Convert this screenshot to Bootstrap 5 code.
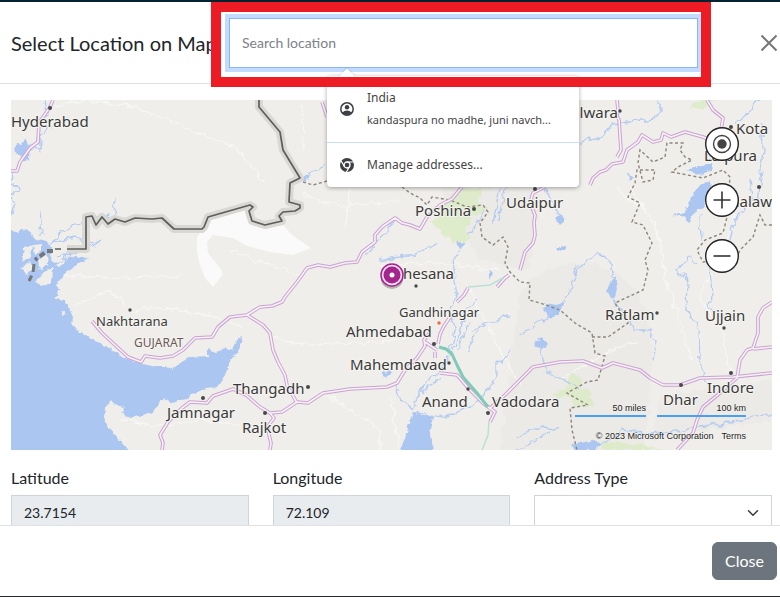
<!DOCTYPE html>
<html lang="en">
<head>
<meta charset="utf-8">
<meta name="viewport" content="width=device-width, initial-scale=1">
<title>Select Location on Map</title>
<link href="https://cdn.jsdelivr.net/npm/bootstrap@5.3.0/dist/css/bootstrap.min.css" rel="stylesheet">
<style>
body{font-family:Lato,sans-serif;color:#212529;background:#fff}
.dialog-shell{height:100vh;border-top:2px solid #04222f;border-bottom:1px solid #26282b}
.dialog-top{height:82px;padding:0 2px 0 11px;gap:16px;border-bottom:1px solid #dee2e6}
.dialog-title{font-size:20px;line-height:30px;width:202px}
.finder{margin-right:46px}
.finder .form-control{height:50px;border:1px solid #86b7fe;border-radius:0;font-size:14px;box-shadow:0 0 0 4px #c2dbfe}
.finder .form-control::placeholder{color:#7b8289}
.callout-frame{inset:-16px -13px -19px -18px;border:10px solid #ed1c24;z-index:6;pointer-events:none}
.suggest{left:98px;top:58px;width:252px;z-index:5;border-radius:4px;box-shadow:0 1px 4px rgba(0,0,0,.35);font-family:"Noto Sans",sans-serif;color:#333}
.suggest::before{content:"";position:absolute;left:14px;top:-5px;width:12px;height:12px;background:#fff;transform:rotate(45deg);box-shadow:-1px -1px 1px rgba(0,0,0,.08)}
.suggest button{padding:0 13px;gap:13px;color:#444}
.suggest .entry-main{height:67px;border:0;border-bottom:1px solid #c9ddf8}
.suggest .entry-manage{height:44px}
.suggest .line-a{font-size:12px;line-height:22px}
.suggest .line-b{font-size:11px;line-height:22px}
.dismiss{width:18px;height:18px}
.dialog-main{min-height:0;padding:16px 8px 0 11px}
.map-view{height:350px;background:#efeeea}
.map-view text{font-family:"Noto Sans",sans-serif;fill:#3a3a3a;stroke:#f5f4f1;stroke-width:2px;paint-order:stroke;stroke-linejoin:round}
.t-city{font-size:15px}
.t-town{font-size:13px}
.t-state{font-size:12px}
.map-view text.t-state{fill:#6b5757}
.map-tools{right:33px;top:27px;gap:22px}
.map-tools button{width:34px;height:34px}
.map-notes{right:26px;bottom:7px;font:9px/14px "Liberation Sans",sans-serif;color:#222;text-shadow:0 0 2px #fff}
.map-notes a{color:inherit}
.map-notes .scales{gap:11px;margin-bottom:12px}
.map-notes .scale{border-bottom:2px solid #4a9ff5;height:16px}
.scale-mi{width:71px}
.scale-km{width:89px}
.fields{margin-top:16px}
.fields label{font-size:16px;line-height:24px;margin-bottom:5px}
.fields .form-control,.fields .form-select{border-radius:0;height:36px;font-size:14px;border-color:#ced4da}
.fields .form-control{background:#e9ecef;padding:5px 12px 7px}
.fields .form-select{background-position:right 10px center}
.dialog-bottom{height:71px;border-top:1px solid #dee2e6;padding:0 3px}
.dialog-bottom .btn{font-size:16px}
</style>
<script src="https://cdn.jsdelivr.net/npm/bootstrap@5.3.0/dist/js/bootstrap.bundle.min.js"></script>
</head>
<body>
<div class="dialog-shell d-flex flex-column overflow-hidden">
<header class="dialog-top d-flex align-items-center flex-shrink-0">
<h1 class="dialog-title mb-0 fw-normal text-nowrap flex-shrink-0">Select Location on Map</h1>
<div class="finder position-relative flex-grow-1">
<input type="text" class="form-control" placeholder="Search location" aria-label="Search location">
<div class="suggest position-absolute bg-white">
<button type="button" class="entry-main btn rounded-0 w-100 d-flex align-items-center text-start">
<svg width="14" height="14" viewBox="0 0 14 14" aria-hidden="true"><circle cx="7" cy="7" r="6.2" fill="none" stroke="#3c3f43" stroke-width="1.5"/><circle cx="7" cy="5.2" r="2.2" fill="#3c3f43"/><path d="M2.4 10.4Q4.3 8.6 7 8.6T11.6 10.4Q9.9 13 7 13T2.4 10.4Z" fill="#3c3f43"/></svg>
<span><span class="line-a d-block">India</span><span class="line-b d-block text-nowrap">kandaspura no madhe, juni navch...</span></span>
</button>
<button type="button" class="entry-manage btn border-0 w-100 d-flex align-items-center text-start">
<svg width="14" height="14" viewBox="0 0 14 14" aria-hidden="true"><circle cx="7" cy="7" r="7" fill="#3c3f43"/><circle cx="7" cy="7" r="3" fill="none" stroke="#fff" stroke-width="1.3"/><path d="M7 4H13.6M4.4 8.5L1.1 2.9M9.6 8.5L6.4 14" stroke="#fff" stroke-width="1.2" fill="none"/></svg>
<span class="line-a">Manage addresses...</span>
</button>
</div>
<div class="callout-frame position-absolute"></div>
</div>
<button type="button" class="dismiss btn p-0 border-0 d-flex flex-shrink-0" aria-label="Close dialog"><svg width="18" height="18" viewBox="0 0 18 18" fill="none" stroke="#777" stroke-width="2"><path d="M1.500 1.500L16.500 16.500M16.500 1.500L1.500 16.500"/></svg></button>
</header>
<main class="dialog-main flex-grow-1 overflow-hidden">
<div class="map-view position-relative overflow-hidden">
<svg class="d-block w-100 h-100" viewBox="11 100 761 350" preserveAspectRatio="xMidYMid slice" role="img" aria-label="Map of Gujarat">
<defs>
<filter id="meander" filterUnits="userSpaceOnUse" x="0" y="90" width="790" height="370"><feTurbulence type="fractalNoise" baseFrequency=".12" numOctaves="2" seed="4"/><feDisplacementMap in="SourceGraphic" scale="9" xChannelSelector="R" yChannelSelector="G"/></filter>
<filter id="shore" filterUnits="userSpaceOnUse" x="0" y="90" width="790" height="370"><feTurbulence type="fractalNoise" baseFrequency=".2" numOctaves="2" seed="9"/><feDisplacementMap in="SourceGraphic" scale="5" xChannelSelector="R" yChannelSelector="G"/></filter>
<g id="roads" fill="none" stroke-linejoin="round">
<path d="M53 100L50 107L39 123L38 142L30 148L20 162L17 171H11"/>
<path d="M92 321L102 333L128 357L141 362L145 356L160 358L173 356L183 350L195 338L212 337L218 327L230 317L247 315L260 307L272 306L282 302L285 297L297 282L307 268L318 265L330 267L345 263L357 262L362 252L375 242V235L382 227L395 218L402 223L410 225L420 229L427 217L440 205L452 199L462 187"/>
<path d="M247 315L263 325L270 333L273 350L278 362L285 375L287 385L297 403"/>
<path d="M162 450L163 443L160 435L168 422L182 408L190 402L207 403L213 396L233 389L246 395L260 407L270 413L282 412L297 402L308 403L323 393L350 389L387 387L397 383L405 370L417 358L425 346L424 340L430 332M438 344L440 334L444 326L450 317M457 302L464 295L468 288M435 352V358M425 342L437 350"/>
<path d="M270 413L274 418L268 426L269 435L271 443L270 450"/>
<path d="M440 373L457 375L470 390L483 403L495 412L490 422M489 409L505 395L520 380L533 367L560 362L583 361L602 368L613 363L640 370L650 378L663 385L680 385L700 378L733 377L772 373"/>
<path d="M737 378L740 360L747 350L753 348L758 333V317L763 308L772 302M753 349L772 347M737 378L730 384L720 393L703 407L697 420L693 433L677 450"/>
<path d="M590 185L593 178L600 172L606 170L612 164L623 162L627 150L638 142L642 135L653 142L661 140L663 133L671 137L685 132L703 137L720 144M617 100L618 110L617 116L619 120L621 150L617 157M707 100L713 110L723 118L721 130"/>
<path d="M545 187L533 193L530 203L535 215L534 223L535 235L533 243L525 252L520 270M509 275L505 278L497 287M322 102L327 117"/>
</g>
</defs>
<path fill="#eae9e4" d="M520 290Q560 250 610 270T650 400T600 450H500ZM440 187L540 187L530 270L480 260ZM660 395L772 380V420L650 440Z" opacity=".6" filter="url(#meander)"/>
<g fill="#dcecc5" opacity=".8" filter="url(#meander)"><path d="M440 205L462 188L482 187L478 202L490 210L472 216L465 230L472 238L462 244L445 238L430 220L445 214ZM690 107L702 100H716L706 106L694 111Z"/><path d="M570 372L583 378L578 386L590 392L594 405L575 408L572 398L548 395L567 388ZM600 442L640 443L662 450H603Z"/></g>
<path fill="none" stroke="#f8f8f5" stroke-width="1.200" d="M55 107Q100 92 155 115T235 146Q246 160 265 182M130 312Q170 300 240 326M65 275L125 278L180 276M230 250L300 275M303 195L345 207L400 200M270 338L310 345L380 342L430 332M350 187L345 230M302 105L303 150M320 390L380 430V450M630 187L640 205L655 222L661 250L665 280L680 320L692 360M728 187L735 225L715 260L700 300L720 325L731 372M380 265L430 262L500 270M470 290L500 350L520 385M560 380L610 350L640 342M120 420L150 426L200 420L240 425M75 305L110 290L125 305M390 395L400 450M618 186L624 197L640 204M700 187L725 183" filter="url(#meander)"/>
<path fill="#fafafa" d="M197 237L206 225L209 219L249 208L252 221L265 227L283 225L292 235L311 248L293 255L270 252L247 246L233 238L213 235L207 242L208 253L220 268L223 274L213 287L205 278L200 265L197 252Z"/>
<g fill="#abc6f1" filter="url(#shore)">
<path d="M5 226L16 233L22 229L30 232L34 238L46 242L52 248L50 256L54 263L64 260L76 256L88 258L76 266L64 274L57 284L60 290L55 298L65 300L70 310L73 318L72 325L80 333L104 345L125 358L143 364L155 367L165 367L172 370L180 363L190 357L208 356V348L213 352L225 348L232 351L236 340L243 337L240 348L230 361L225 375L217 387L203 390L193 393L187 399L178 401L173 403L164 399L157 405L153 412L143 415L130 418L122 413L125 407L115 405L111 400L105 408L104 417L108 427L117 437L132 455H5Z"/>
<path d="M413 413L420 414L433 417L430 428L432 440L433 455H399L407 433L409 422ZM14 146L22 143L26 138L30 146L29 160L23 162L20 156L15 153ZM546 303L556 305L565 302L560 312L551 320L546 313L543 310ZM534 342L542 338L547 344L542 349L535 346ZM609 285L616 275L618 290L612 300L607 292ZM686 170L699 167L711 163L712 171L702 175L695 173ZM700 185L711 181L709 194L705 205L696 211L689 222L682 216L672 215L685 212L690 200ZM555 217L562 215L565 221L560 225ZM555 248L565 246L566 250L558 251ZM456 242L466 243L460 249ZM382 370L386 374L390 369L391 374L387 377L382 376ZM300 179L311 174L306 182ZM628 174L634 177L630 182ZM489 270L493 274L489 279ZM570 445L595 440L603 445L595 450H575Z"/>
</g>
<g fill="#efeeea" filter="url(#shore)"><path d="M24 247L33 244L31 256L22 262ZM20 268L31 262L34 268L26 275ZM36 281L44 272L53 268L52 282L42 287ZM38 260L47 254L48 265L40 270ZM56 264L64 260L61 268ZM33 245L42 244L42 251L35 255Z"/><circle cx="63" cy="313" r="2"/><circle cx="164" cy="401" r="1.500"/></g>
<g fill="none" stroke="#b4ccf1" stroke-width="1.300" stroke-linejoin="round" filter="url(#meander)">
<path d="M45 100L47 115L39 125L39 150L27 148M47 122L50 127L42 134L40 150M13 173L12 182L18 190L12 197L15 205L11 213M40 210L42 236M50 245L60 232L84 219L115 216M115 198L114 215M53 243L75 238L88 244L103 239M56 256L80 253L103 239M64 260L68 250L85 252"/>
<path d="M303 178L325 164M367 256L383 236L395 219M377 260L415 255L437 243M483 212L476 225L468 235M462 246L454 260L457 290L450 310L455 330L448 355M500 187L493 223M506 190L498 220"/>
<path d="M580 142L600 138L612 125L630 122L655 120L660 110L658 100M735 125L750 112L760 100M760 125L764 150L759 195L757 205M750 178L752 200L735 220L730 240M574 280L578 268L600 253L612 265L615 280M560 308L574 280L576 265M520 335L541 322L552 312M540 345L546 372L580 388M613 300L625 315L635 330L650 330L655 340L653 360M676 270L688 280L687 310L699 330L700 360L708 390M710 270L712 295L708 308L727 318M700 215L701 240M545 187L562 218M678 270L690 255L697 265"/>
<path d="M396 385L400 398L412 408L425 385L440 370L450 355L460 335L465 310L478 300M413 411L432 417L455 415L463 408L475 405L490 387L497 375V365L512 350M470 322L457 350M480 325L468 350M510 316L495 320L470 330M415 398L440 378M516 438L540 426L560 430M516 450L550 432M600 445L625 430L650 434L685 430L710 425L740 422L755 416L776 413"/>
</g>
<g fill="none" stroke="#8d867d" stroke-width="1.400" stroke-dasharray="3 2.500">
<path d="M303 182L313 185L327 181M402 187L410 193L420 198L427 205L432 197L450 200L467 207L483 205L488 212L480 223L482 237L493 245L503 237L508 247L505 263L510 272L520 282L530 283L529 300L540 303L560 310L575 323L592 333L595 353L605 356L598 380L587 382L567 393L588 405L570 408L572 430L577 450"/>
<path d="M592 337L608 337L628 323L615 303L643 290L648 270L645 260L652 243L643 225L632 222L640 203L628 197L635 183L637 170L655 170L653 180L643 182L638 163L640 150L653 162L665 157L667 143L683 143L680 150L685 157L692 160L678 167L672 172L703 178L723 170L730 177L727 217L723 233L705 240L697 250L703 262L737 257L740 250L753 237L760 215L765 225H772"/>
</g>
<g fill="none" stroke-linejoin="round"><path stroke="#d9d8d4" stroke-width="8" d="M259 100V107L280 132L283 150L300 178L290 183L289 202L300 205V208L295 211L283 212L279 216L282 221L265 225L252 221L249 211L253 207L250 205L208 217L204 227L202 229H174L162 218L152 219L135 218L125 222L115 219L108 224L102 217L96 225L92 216L86 217V249H67"/><path stroke="#5d5d5c" stroke-width="1.700" d="M259 100V107L280 132L283 150L300 178L290 183L289 202L300 205V208L295 211L283 212L279 216L282 221L265 225L252 221L249 211L253 207L250 205L208 217L204 227L202 229H174L162 218L152 219L135 218L125 222L115 219L108 224L102 217L96 225L92 216L86 217V249H67M61 249H55"/><path stroke="#72777c" stroke-width="4" stroke-dasharray="6 3" d="M53 251L47 251L35 260"/><path stroke="#72777c" stroke-width="3" stroke-dasharray="8 4" d="M34 264L33 273L29 281"/></g>
<use href="#roads" stroke="#caa3d1" stroke-width="3.600"/><use href="#roads" stroke="#f7f1f6" stroke-width="1.600"/>
<path fill="none" stroke="#7fcbb8" stroke-width="3" stroke-linejoin="round" d="M439 347L446 349L452 354L457 365L463 377L477 393L488 407"/><path fill="none" stroke="#b9e2d4" stroke-width="1.500" d="M468 287L490 285L503 278M489 421L488 435L482 450"/>
<g fill="#484848"><circle cx="50" cy="108" r="2"/><circle cx="130" cy="310" r="1.700"/><circle cx="203" cy="398" r="2"/><circle cx="308" cy="387" r="2"/><circle cx="265" cy="413" r="2"/><circle cx="474" cy="209" r="2"/><circle cx="535" cy="189" r="2"/><circle cx="416" cy="286" r="1.700"/><circle cx="434" cy="344" r="2"/><circle cx="449" cy="363" r="1.700"/><circle cx="468" cy="389" r="1.700"/><circle cx="488" cy="413" r="2"/><circle cx="620" cy="111" r="1.700"/><circle cx="731" cy="127" r="2"/><circle cx="759" cy="187" r="2"/><circle cx="657" cy="313" r="1.700"/><circle cx="724" cy="328" r="1.700"/><circle cx="731" cy="373" r="2"/><circle cx="681" cy="385" r="2"/><circle cx="439" cy="323" r="1.700" fill="#ef6849"/></g>
<g class="t-city"><text x="11" y="127">Hyderabad</text><text x="167" y="418">Jamnagar</text><text x="233" y="394">Thangadh</text><text x="242" y="433">Rajkot</text><text x="415" y="216">Poshina</text><text x="506" y="208">Udaipur</text><text x="403" y="279">hesana</text><text x="346" y="337">Ahmedabad</text><text x="350" y="370">Mahemdavad</text><text x="422" y="407">Anand</text><text x="492" y="407">Vadodara</text><text x="605" y="320">Ratlam</text><text x="705" y="321">Ujjain</text><text x="707" y="393">Indore</text><text x="663" y="405">Dhar</text><text x="736" y="134">Kota</text><text x="704" y="161">Lalpura</text><text x="618" y="118" text-anchor="end">lwara</text><text x="772" y="207" text-anchor="end">halaw</text></g>
<g class="t-town"><text x="96" y="326">Nakhtarana</text><text x="399" y="317">Gandhinagar</text></g><text class="t-state" x="134" y="347">GUJARAT</text>
<ellipse cx="392" cy="279" rx="11" ry="10" fill="#555" opacity=".4"/><circle cx="392" cy="275" r="11" fill="#f2dff0" stroke="#a6258d" stroke-width="1.500"/><circle cx="392" cy="275" r="8.500" fill="#a6258d"/><circle cx="392" cy="275" r="2.500" fill="#fff"/>
</svg>
<div class="map-tools position-absolute d-flex flex-column">
<button type="button" class="btn p-0 border-0 d-flex" aria-label="Locate me"><svg width="34" height="34" viewBox="0 0 34 34"><circle cx="17" cy="17" r="16.300" fill="#fff" stroke="#222" stroke-width="1.400"/><circle cx="17" cy="17" r="8.500" fill="none" stroke="#444" stroke-width="1.400"/><circle cx="17" cy="17" r="4.700" fill="#444"/></svg></button>
<button type="button" class="btn p-0 border-0 d-flex" aria-label="Zoom in"><svg width="34" height="34" viewBox="0 0 34 34"><circle cx="17" cy="17" r="16.300" fill="#fff" stroke="#222" stroke-width="1.400"/><path d="M8.500 17H25.500M17 8.500V25.500" stroke="#333" stroke-width="1.600"/></svg></button>
<button type="button" class="btn p-0 border-0 d-flex" aria-label="Zoom out"><svg width="34" height="34" viewBox="0 0 34 34"><circle cx="17" cy="17" r="16.300" fill="#fff" stroke="#222" stroke-width="1.400"/><path d="M8.500 17H25.500" stroke="#333" stroke-width="1.600"/></svg></button>
</div>
<div class="map-notes position-absolute text-end">
<div class="scales d-flex justify-content-end"><div class="scale scale-mi">50 miles</div><div class="scale scale-km">100 km</div></div>
<div class="d-flex justify-content-end gap-2 text-nowrap"><span>© 2023 Microsoft Corporation</span><a href="#" class="text-decoration-none">Terms</a></div>
</div>
</div>
<form class="fields row">
<div class="col-4"><label for="lat" class="d-block">Latitude</label><input id="lat" class="form-control" type="text" value="23.7154" readonly></div>
<div class="col-4"><label for="lng" class="d-block">Longitude</label><input id="lng" class="form-control" type="text" value="72.109" readonly></div>
<div class="col-4"><label for="kind" class="d-block">Address Type</label><select id="kind" class="form-select"><option></option></select></div>
</form>
</main>
<footer class="dialog-bottom d-flex align-items-center justify-content-end flex-shrink-0"><button type="button" class="btn btn-secondary">Close</button></footer>
</div>
</body>
</html>
